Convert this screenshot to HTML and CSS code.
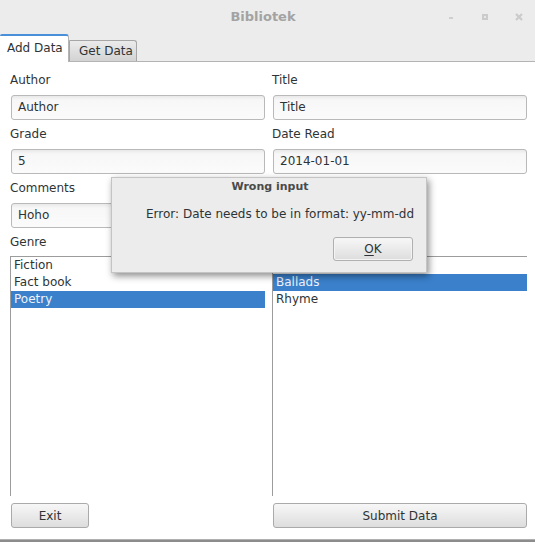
FILE: index.html
```html
<!DOCTYPE html>
<html>
<head>
<meta charset="utf-8">
<title>Bibliotek</title>
<link rel="stylesheet" href="styles.css">
</head>
<body>
<div class="window">
  <header class="titlebar">
    <span></span>
    <span class="title">Bibliotek</span>
    <span class="wm-buttons">
      <svg class="wm" width="8" height="8" viewBox="0 0 8 8"><rect x="2" y="4" width="4" height="2" fill="#cfcfcf"/></svg>
      <svg class="wm" width="8" height="8" viewBox="0 0 8 8"><rect x="1" y="1" width="6" height="6" fill="#cbcbcb"/><rect x="3" y="3" width="2" height="2" fill="#e6e6e6"/></svg>
      <svg class="wm" width="8" height="8" viewBox="0 0 8 8"><path d="M1 1 L7 7 M7 1 L1 7" stroke="#cbcbcb" stroke-width="2.2"/></svg>
    </span>
  </header>
  <nav class="tabs">
    <div class="tab active">Add Data</div>
    <div class="tab">Get Data</div>
  </nav>
  <main class="content">
    <div class="fields">
      <div class="field"><label>Author</label><div class="input">Author</div></div>
      <div class="field"><label>Title</label><div class="input">Title</div></div>
      <div class="field"><label>Grade</label><div class="input">5</div></div>
      <div class="field"><label>Date Read</label><div class="input">2014-01-01</div></div>
      <div class="field"><label>Comments</label><div class="input">Hoho</div></div>
      <div class="field"></div>
    </div>
    <div class="lists">
      <div class="col">
        <label>Genre</label>
        <ul class="list">
          <li>Fiction</li>
          <li>Fact book</li>
          <li class="sel">Poetry</li>
        </ul>
      </div>
      <div class="col">
        <label>Subgenre</label>
        <ul class="list">
          <li>Sonnet</li>
          <li class="sel">Ballads</li>
          <li>Rhyme</li>
        </ul>
      </div>
    </div>
    <div class="actions">
      <button class="btn exit">Exit</button>
      <button class="btn submit">Submit Data</button>
    </div>
  </main>
  <div class="bottom-strip"></div>

  <div class="dialog">
    <div class="dlg-title">Wrong input</div>
    <div class="dlg-msg">Error: Date needs to be in format: yy-mm-dd</div>
    <div class="dlg-actions"><button class="btn ok"><u>O</u>K</button></div>
  </div>
</div>
</body>
</html>
```

FILE: styles.css
```css
html, body {
  margin: 0;
  padding: 0;
}
body {
  width: 535px;
  height: 542px;
  overflow: hidden;
  background: #ececec;
  font-family: "DejaVu Sans", "Liberation Sans", sans-serif;
  font-size: 12px;
  color: #2e3436;
}
.window {
  position: relative;
  width: 535px;
  height: 542px;
}
.titlebar {
  height: 34px;
  display: grid;
  grid-template-columns: 1fr auto 1fr;
  align-items: center;
  background: #ececec;
}
.title {
  font-weight: bold;
  font-size: 13px;
  color: #a3a3a3;
  margin-right: 9px;
  margin-top: -2px;
}
.wm-buttons {
  justify-self: end;
  display: flex;
  gap: 26px;
  margin-right: 12px;
  margin-top: -1px;
}
.wm { display: block; }

.tabs {
  height: 27px;
  display: flex;
  align-items: flex-end;
  border-bottom: 1px solid #b4b4b4;
  background: #ececec;
}
.tab {
  box-sizing: border-box;
  height: 21px;
  width: 68px;
  padding-left: 9px;
  line-height: 20px;
  font-size: 12px;
  color: #2e3436;
  background: linear-gradient(#ebebeb, #d3d3d3);
  border: 1px solid #a6a6a6;
  border-bottom: none;
  border-top-right-radius: 3px;
  border-top-left-radius: 1px;
}
.tab.active {
  height: 28px;
  width: 69px;
  margin-bottom: -1px;
  padding-left: 7px;
  line-height: 24px;
  background: #ffffff;
  border: none;
  border-top: 2px solid #4a90d9;
  border-right: 1px solid #b4b4b4;
  border-top-right-radius: 3px;
  border-top-left-radius: 2px;
}

.content {
  box-sizing: border-box;
  height: 477px;
  background: #ffffff;
  padding: 9px 8px 11px 10px;
  display: flex;
  flex-direction: column;
}
.fields {
  display: grid;
  grid-template-columns: 255px 255px;
  column-gap: 7px;
}
.field {
  display: flex;
  flex-direction: column;
  margin-bottom: 5px;
  min-height: 49px;
}
label {
  display: block;
  line-height: 18px;
  margin-bottom: 6px;
}
.input {
  box-sizing: border-box;
  height: 25px;
  margin-left: 1px;
  width: 254px;
  border: 1px solid #b9b9b9;
  border-radius: 3px;
  background: linear-gradient(#e9e9e9, #f7f7f7 4px, #fbfbfb);
  padding-left: 6px;
  line-height: 23px;
  color: #2e3436;
}
.lists {
  flex: 1;
  display: grid;
  grid-template-columns: 255px 255px;
  column-gap: 7px;
  min-height: 0;
}
.col {
  display: flex;
  flex-direction: column;
}
.col label { margin-bottom: 5px; }
.list {
  flex: 1;
  margin: 0;
  padding: 0;
  list-style: none;
  border-left: 1px solid #9c9c9c;
  border-top: 1px solid #9c9c9c;
  background: #ffffff;
}
.list li {
  height: 17px;
  line-height: 17px;
  padding-left: 3px;
  color: #2e3436;
}
.list li.sel {
  background: #3a80cb;
  color: #eef3fa;
}
.actions {
  display: grid;
  grid-template-columns: 255px 255px;
  column-gap: 7px;
  margin-top: 7px;
}
.btn {
  box-sizing: border-box;
  height: 25px;
  font-family: "DejaVu Sans", "Liberation Sans", sans-serif;
  font-size: 12px;
  color: #2e3436;
  background: linear-gradient(#f7f7f7, #dddddd);
  border: 1px solid #aaaaaa;
  border-radius: 3px;
  padding: 0;
}
.exit { width: 78px; margin-left: 1px; }
.submit { width: 254px; margin-left: 1px; }
.bottom-strip {
  height: 3px;
  background: #8c8c8c;
  border-top: 1px solid #b0b0b0;
}

.dialog {
  position: absolute;
  left: 111px;
  top: 177px;
  width: 316px;
  height: 96px;
  box-sizing: border-box;
  background: #ececec;
  border: 1px solid #c4c4c4;
  box-shadow: 2px 3px 7px rgba(0, 0, 0, 0.45);
  display: flex;
  flex-direction: column;
}
.dlg-title {
  text-align: center;
  font-weight: bold;
  font-size: 11px;
  line-height: 18px;
  color: #4a4a4a;
  margin-left: 2px;
}
.dlg-msg {
  margin-top: 9px;
  line-height: 18px;
  padding-left: 34px;
  color: #2e3436;
}
.dlg-actions {
  margin-top: 14px;
  display: flex;
  justify-content: flex-end;
  padding-right: 13px;
}
.ok {
  width: 80px;
  height: 24px;
  border: 1px solid #b0b0b0;
  box-shadow: inset 0 0 0 1px #f4f4f4;
}
.ok u { text-decoration: underline; text-underline-offset: 2px; }
```
